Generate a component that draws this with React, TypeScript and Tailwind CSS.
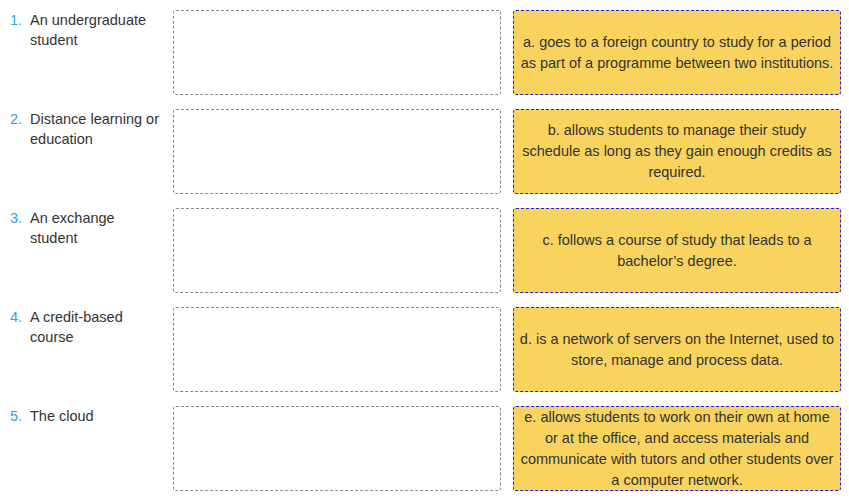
const rows = [
  {
    n: "1.",
    label: "An undergraduate student",
    answer: "a. goes to a foreign country to study for a period as part of a programme between two institutions.",
  },
  {
    n: "2.",
    label: "Distance learning or education",
    answer: "b. allows students to manage their study schedule as long as they gain enough credits as required.",
  },
  {
    n: "3.",
    label: "An exchange student",
    answer: "c. follows a course of study that leads to a bachelor’s degree.",
  },
  {
    n: "4.",
    label: "A credit-based course",
    answer: "d. is a network of servers on the Internet, used to store, manage and process data.",
  },
  {
    n: "5.",
    label: "The cloud",
    answer: "e. allows students to work on their own at home or at the office, and access materials and communicate with tutors and other students over a computer network.",
  },
];

function App() {
  return (
    <div
      className="min-h-screen bg-white pl-[10px] pt-[10px] text-[14.5px] text-[#333]"
      style={{ fontFamily: '"Liberation Sans", Arial, sans-serif' }}
    >
      <div className="flex flex-col gap-[14px]">
        {rows.map((r) => (
          <div key={r.n} className="flex items-stretch">
            {/* etiqueta */}
            <div className="flex w-[163px] shrink-0 leading-[20px]">
              <span className="w-[20px] shrink-0 text-[#2ba6df]">{r.n}</span>
              <span className="pr-2">{r.label}</span>
            </div>

            {/* zona para soltar */}
            <div className="h-[85px] w-[328px] shrink-0 rounded-[3px] border border-dashed border-[#8a8a8a] bg-white" />

            {/* opción */}
            <div className="ml-[12px] flex h-[85px] w-[328px] shrink-0 items-center justify-center rounded-[3px] border border-dashed border-[#1a1aff] bg-[#f8d35e] px-[5px] text-center leading-[21px]">
              {r.answer}
            </div>
          </div>
        ))}
      </div>
    </div>
  );
}

export default App;
